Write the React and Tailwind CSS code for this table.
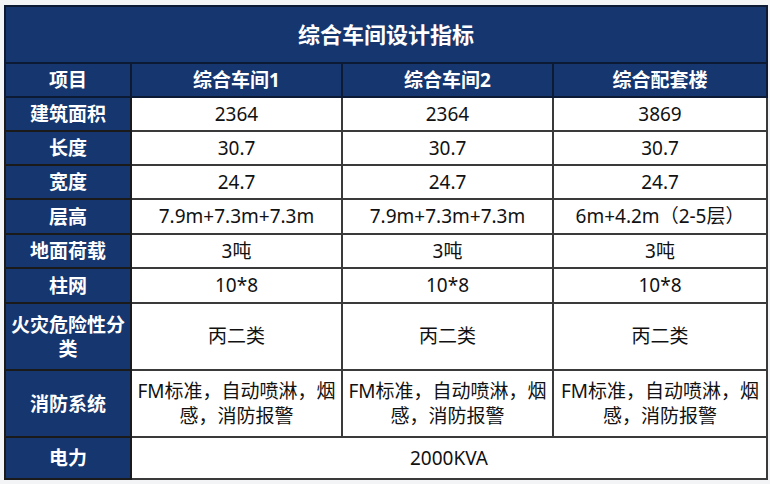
import React from "react";

const cols = ["综合车间1", "综合车间2", "综合配套楼"];

const rows = [
  { label: "建筑面积", values: ["2364", "2364", "3869"], h: "h-[34px]" },
  { label: "长度", values: ["30.7", "30.7", "30.7"], h: "h-[34px]" },
  { label: "宽度", values: ["24.7", "24.7", "24.7"], h: "h-[34px]" },
  { label: "层高", values: ["7.9m+7.3m+7.3m", "7.9m+7.3m+7.3m", "6m+4.2m（2-5层）"], h: "h-[35px]" },
  { label: "地面荷载", values: ["3吨", "3吨", "3吨"], h: "h-[34px]" },
  { label: "柱网", values: ["10*8", "10*8", "10*8"], h: "h-[35px]" },
  { label: "火灾危险性分类", values: ["丙二类", "丙二类", "丙二类"], h: "h-[67px]" },
  {
    label: "消防系统",
    values: ["FM标准，自动喷淋，烟感，消防报警", "FM标准，自动喷淋，烟感，消防报警", "FM标准，自动喷淋，烟感，消防报警"],
    h: "h-[67px]",
  },
];

export default function App() {
  return (
    <div
      className="w-[770px] h-[484px] bg-[#f3f4f6] pt-[5px] pl-[4px]"
      style={{ fontFamily: '"Noto Sans", "Noto Sans CJK SC", sans-serif' }}
    >
      <table className="table-fixed border-collapse w-[762px] text-[19px] leading-[25px] text-[#111]">
        <colgroup>
          <col className="w-[126px]" />
          <col className="w-[211px]" />
          <col className="w-[211px]" />
          <col className="w-[214px]" />
        </colgroup>
        <tbody>
          {/* title */}
          <tr className="h-[57px] bg-[#16366f]">
            <td colSpan={4} className="border-2 border-[#0d1a33] text-center text-white font-bold text-[22px]">
              综合车间设计指标
            </td>
          </tr>
          {/* header */}
          <tr className="h-[34px] bg-[#16366f]">
            <td className="border-2 border-[#0d1a33] text-center text-white font-bold">项目</td>
            {cols.map((c) => (
              <td key={c} className="border-2 border-[#0d1a33] text-center text-white font-bold">
                {c}
              </td>
            ))}
          </tr>
          {rows.map((r) => (
            <tr key={r.label} className={r.h}>
              <td className="border-2 border-[#1a1a1a] bg-[#16366f] text-center text-white font-bold px-[1px] leading-[24px]">
                {r.label}
              </td>
              {r.values.map((v, i) => (
                <td key={i} className="border-2 border-[#3a3a3a] bg-white text-center px-[2px]">
                  {v}
                </td>
              ))}
            </tr>
          ))}
          <tr className="h-[42px]">
            <td className="border-2 border-[#1a1a1a] bg-[#16366f] text-center text-white font-bold">电力</td>
            <td colSpan={3} className="border-2 border-[#3a3a3a] bg-white text-center">
              2000KVA
            </td>
          </tr>
        </tbody>
      </table>
    </div>
  );
}
